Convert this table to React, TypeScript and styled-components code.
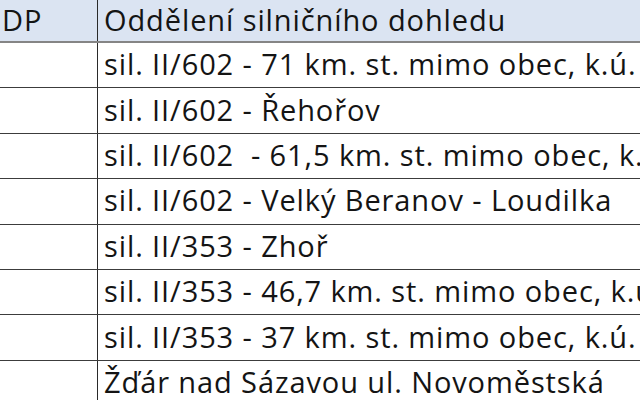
import React from "react";
import styled, { createGlobalStyle } from "styled-components";

const Global = createGlobalStyle`
  html, body { margin: 0; padding: 0; background: #ffffff; }
  * { box-sizing: border-box; }
`;

const Sheet = styled.div`
  width: 640px;
  height: 400px;
  overflow: hidden;
  background: #ffffff;
  font-family: "Open Sans", "Liberation Sans", sans-serif;
  color: #141414;
`;

const Row = styled.div<{ $header?: boolean }>`
  display: grid;
  grid-template-columns: 98px 1fr;
  height: ${(p) => (p.$header ? "43px" : "45.4px")};
  background: ${(p) => (p.$header ? "#dbe4f2" : "#ffffff")};
  border-bottom: ${(p) => (p.$header ? "2px solid #858585" : "1.5px solid #3c3c3c")};
`;

const Cell = styled.div<{ $first?: boolean }>`
  display: flex;
  align-items: center;
  padding-left: ${(p) => (p.$first ? "2px" : "6px")};
  padding-bottom: 3px;
  white-space: pre;
  overflow: hidden;
  font-size: 29px;
  letter-spacing: 0.9px;
  border-right: ${(p) => (p.$first ? "1.5px solid #2a2a2a" : "none")};
`;

const rows = [
  "sil. II/602 - 71 km. st. mimo obec, k.ú. Jihlava",
  "sil. II/602 - Řehořov",
  "sil. II/602  - 61,5 km. st. mimo obec, k.ú. Jihlava",
  "sil. II/602 - Velký Beranov - Loudilka",
  "sil. II/353 - Zhoř",
  "sil. II/353 - 46,7 km. st. mimo obec, k.ú. Jihlava",
  "sil. II/353 - 37 km. st. mimo obec, k.ú. Jihlava",
  "Žďár nad Sázavou ul. Novoměstská",
];

export default function App() {
  return (
    <>
      <Global />
      <Sheet>
        <Row $header>
          <Cell $first>DP</Cell>
          <Cell>Oddělení silničního dohledu</Cell>
        </Row>
        {rows.map((r, i) => (
          <Row key={i}>
            <Cell $first />
            <Cell>{r}</Cell>
          </Row>
        ))}
      </Sheet>
    </>
  );
}
